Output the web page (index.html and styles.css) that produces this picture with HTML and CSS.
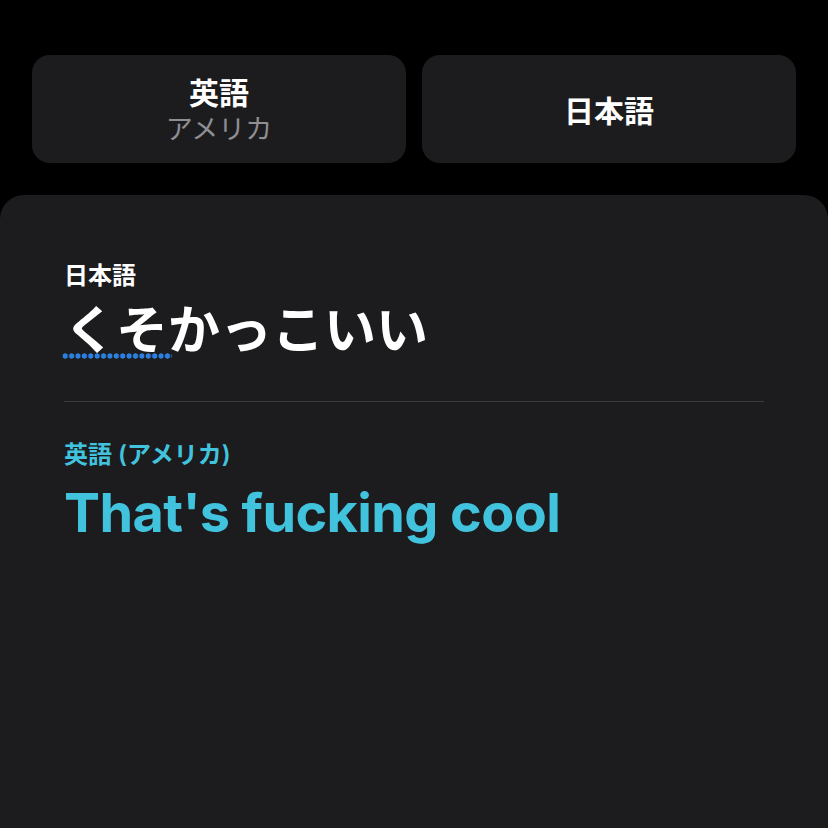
FILE: index.html
```html
<!DOCTYPE html>
<html lang="ja">
<head>
<meta charset="utf-8">
<link rel="stylesheet" href="styles.css">
</head>
<body>
<div class="langs">
  <div class="lang-btn">
    <div class="lang-name">英語</div>
    <div class="lang-region">アメリカ</div>
  </div>
  <div class="lang-btn">
    <div class="lang-name">日本語</div>
  </div>
</div>
<div class="panel">
  <div class="src-label">日本語</div>
  <div class="src-text"><span class="marked">くそ</span>かっこいい</div>
  <div class="divider"></div>
  <div class="dst-label">英語 (アメリカ)</div>
  <div class="dst-text">That's fucking cool</div>
</div>
</body>
</html>
```
FILE: styles.css
```css
html, body {
  margin: 0;
  background: #000;
  height: 100%;
}
body {
  font-family: "Inter", "Noto Sans CJK JP", sans-serif;
  color: #fff;
  overflow: hidden;
}
.langs {
  display: flex;
  gap: 16px;
  padding: 55px 32px 0;
}
.lang-btn {
  flex: 1;
  height: 108px;
  background: #1c1c1e;
  border-radius: 18px;
  display: flex;
  flex-direction: column;
  align-items: center;
  justify-content: center;
}
.lang-name {
  font-family: "Noto Sans CJK JP", sans-serif;
  font-size: 30px;
  font-weight: 700;
  line-height: 34px;
}
.lang-region {
  font-family: "Noto Sans CJK JP", sans-serif;
  font-size: 27px;
  font-weight: 400;
  line-height: 34px;
  margin-top: 3px;
  color: #8e8e93;
}
.panel {
  margin-top: 32px;
  background: #1c1c1e;
  border-radius: 24px 24px 0 0;
  height: 640px;
  padding: 0 64px;
  display: flex;
  flex-direction: column;
}
.src-label {
  margin-top: 64px;
  font-family: "Noto Sans CJK JP", sans-serif;
  font-size: 24px;
  font-weight: 700;
  line-height: 30px;
}
.src-text {
  margin-top: 6px;
  font-family: "Noto Sans CJK JP", sans-serif;
  font-size: 52px;
  font-weight: 700;
  line-height: 64px;
}
.marked {
  position: relative;
}
.marked::after {
  content: "";
  position: absolute;
  left: -2px;
  right: -4px;
  bottom: 5px;
  height: 6px;
  background-image: radial-gradient(circle, #2a7fe0 2.4px, transparent 2.9px);
  background-size: 6.4px 6px;
  background-repeat: repeat-x;
}
.divider {
  margin-top: 42px;
  height: 1px;
  background: #3a3a3c;
}
.dst-label {
  margin-top: 38px;
  font-family: "Inter", "Noto Sans CJK JP", sans-serif;
  font-size: 24px;
  font-weight: 600;
  line-height: 30px;
  color: #41c3de;
}
.dst-text {
  margin-top: 10px;
  font-family: "Inter", sans-serif;
  font-size: 54px;
  font-weight: 700;
  line-height: 66px;
  letter-spacing: -0.6px;
  color: #41c3de;
}
```
